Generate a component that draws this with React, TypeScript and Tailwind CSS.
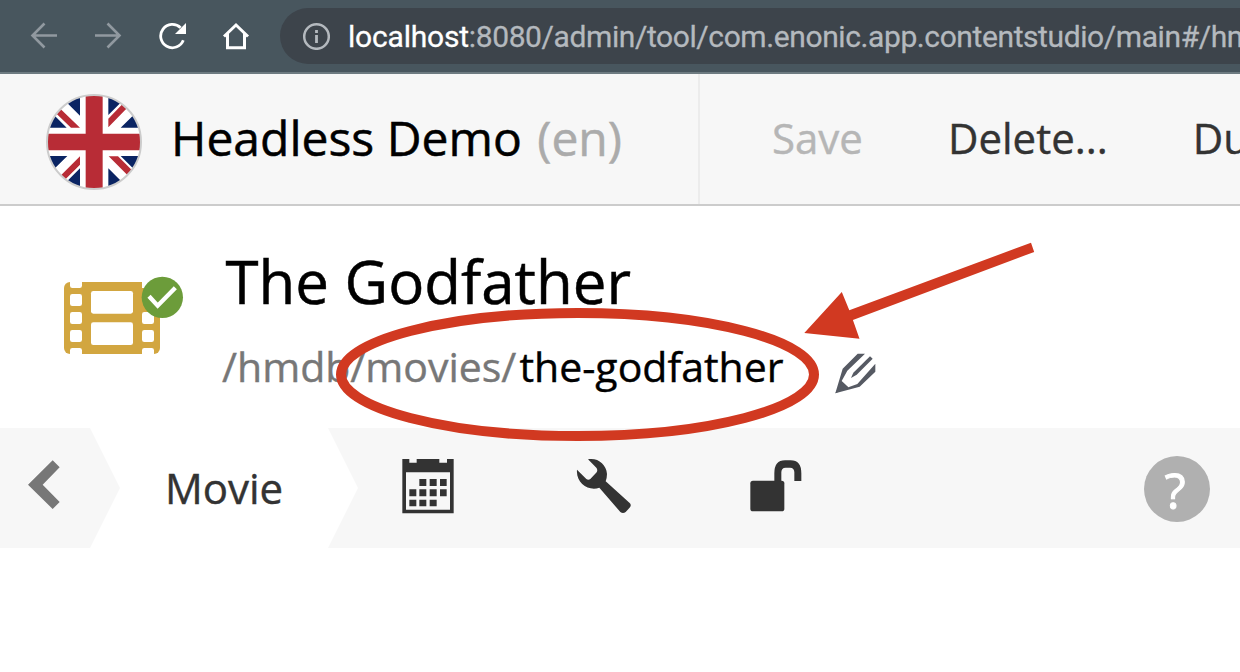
import React from 'react';

function BrowserBar() {
  return (
    <div className="flex h-[74px] items-center border-b-2 border-[#6e7b81] bg-[#48565e]">
      <svg className="ml-[30px] h-[28px] w-[220px] shrink-0" viewBox="30 22 220 28" fill="none">
        <g stroke="#9199a0" strokeWidth="2.6">
          <path d="M57 35.500H32.500M44.500 23.500l-12 12 12 12" />
          <path d="M95 35.500h24.500M107.500 23.500l12 12-12 12" />
        </g>
        <path d="M183.300 40.300A11.700 11.700 0 1 1 180.600 27.700" stroke="#fff" strokeWidth="2.800" />
        <path d="M186 23v11h-11z" fill="#fff" />
        <path d="M224 36.500l12-11.500 12 11.500M227.500 33.500v14.200h17V33.500" stroke="#fff" strokeWidth="3" />
      </svg>
      <div className="ml-[30px] flex h-14 min-w-0 flex-1 items-center overflow-hidden rounded-l-full bg-[#3d444b]">
        <svg className="ml-[22px] h-7 w-7 shrink-0" viewBox="0 0 28 28" fill="none">
          <circle cx="14.500" cy="14.500" r="12.300" stroke="#b4b9be" strokeWidth="2.500" />
          <path d="M14.500 13v8M14.500 8v3" stroke="#b4b9be" strokeWidth="2.800" />
        </svg>
        <div className="ml-[18px] whitespace-nowrap pt-px font-[Roboto,sans-serif] text-[30px] leading-[40px] tracking-[-0.4px] text-[#b4b9be] [-webkit-text-stroke:0.3px_currentColor]">
          <span className="tracking-[-0.2px] text-white">localhost</span>:8080/admin/tool/com.enonic.app.contentstudio/main#/hmdb
        </div>
      </div>
    </div>
  );
}

function Flag() {
  return (
    <svg className="ml-[46px] mt-[5px] h-[96px] w-[96px] shrink-0" viewBox="48 42 288 288">
      <defs>
        <clipPath id="disc"><circle cx="192" cy="186" r="141" /></clipPath>
      </defs>
      <g clipPath="url(#disc)">
        <path fill="#fff" d="M40 40h300v300H40z" />
        <path fill="#0a2463" d="M150 38v69L90 47zM48 81l62 62H48zM235 38v67l67-67zM272 143l64-63v63zM112 228l-64 63v-63zM150 265v65H85zM272 228h64v64zM235 265l65 65h-65z" />
        <path fill="#b82c36" d="M80 76l70 67h-27L70 92zM300 75l-65 67v-26l52-54zM150 229v25l-64 64-14-11zM236 229h28l60 60-14 14z" />
        <path fill="#b82c36" d="M167 40h51v121h120v50H218v120h-51V211H48v-50h119z" />
      </g>
      <circle cx="192" cy="186" r="141" fill="none" stroke="#ccc" strokeWidth="6" />
    </svg>
  );
}

function Toolbar() {
  return (
    <div className="flex h-[132px] border-b-2 border-[#ccc] bg-[#f7f7f7]">
      <div className="flex w-[700px] shrink-0 items-center border-r-2 border-[#ececec]">
        <Flag />
        <div className="ml-[29px] whitespace-nowrap pb-[3px] text-[48px] leading-[64px] [-webkit-text-stroke:0.5px_currentColor]">
          Headless Demo <span className="ml-[3px] text-[#ababab]">(en)</span>
        </div>
      </div>
      <div className="flex min-w-0 flex-1 items-center gap-[85px] overflow-hidden whitespace-nowrap pb-[3px] pl-[72px] text-[42px] leading-[60px] text-[#333] [-webkit-text-stroke:0.4px_currentColor]">
        <span className="text-[#b6b6b6]">Save</span>
        <span>Delete...</span>
        <span>Duplicate...</span>
      </div>
    </div>
  );
}

function FilmIcon() {
  return (
    <svg className="ml-16 mt-[70px] h-[78px] w-[120px] shrink-0" viewBox="42 48 360 234">
      <path fill="#d2a640" d="M60 66h252a18 18 0 0 1 18 18v180a18 18 0 0 1-18 18H60a18 18 0 0 1-18-18V84a18 18 0 0 1 18-18z" />
      <g fill="#fff">
        <rect x="123" y="93" width="126" height="68" rx="7" />
        <rect x="123" y="187" width="126" height="68" rx="7" />
        <path d="M60 60h36v17q0 7-7 7H67q-7 0-7-7zM60 286v-15q0-7 7-7h22q7 0 7 7v15zM276 286v-15q0-7 7-7h22q7 0 7 7v15zM276 48h56v36h-56z" />
        <rect x="60" y="102" width="36" height="36" rx="7" />
        <rect x="60" y="156" width="36" height="36" rx="7" />
        <rect x="60" y="210" width="36" height="36" rx="7" />
        <rect x="276" y="156" width="36" height="36" rx="7" />
        <rect x="276" y="210" width="36" height="36" rx="7" />
      </g>
      <circle cx="337" cy="112" r="62" fill="#6c9c3a" />
      <path d="M297 109l26 28 53-54" fill="none" stroke="#fff" strokeWidth="13" />
    </svg>
  );
}

function ContentHeader() {
  return (
    <div className="flex h-[222px]">
      <FilmIcon />
      <div className="ml-[38px] flex flex-col whitespace-nowrap pt-[35px]">
        <h1 className="pl-[3.5px] text-[60px] leading-[80px] [-webkit-text-stroke:0.5px_currentColor]">The Godfather</h1>
        <div className="flex pt-[15px] text-[41px] leading-[60px] [-webkit-text-stroke:0.4px_currentColor]">
          <span className="text-[#777]">/hmdb/movies/</span>
          <span className="ml-[3px]">the-godfather</span>
          <svg className="ml-[51px] mt-[17px] h-[41px] w-[41px]" viewBox="166 371 123 123">
            <path fill="#565a63" d="M234 373h22l-53 51-17 31 20 19 27-10 54-61v24l-47 45-73 20 22-74z" />
            <path fill="#565a63" d="M187 457l18 17-38 18z" />
            <path d="M214 446l7-16 50-49 8 7-48 48z" fill="#565a63" />
          </svg>
        </div>
      </div>
    </div>
  );
}

function StepBar() {
  return (
    <div className="flex h-[120px] text-[42px] leading-[60px] text-[#333]">
      <div className="flex w-[120px] shrink-0 bg-[#f7f7f7] [clip-path:polygon(0_0,90px_0,100%_50%,90px_100%,0_100%)]">
        <svg className="ml-7 mt-8 h-[50px] w-8" viewBox="84 119 96 150">
          <path fill="#777" d="M158 120l21 21-51 52 51 52-21 21-74-73z" />
        </svg>
      </div>
      <div className="flex w-[208px] shrink-0 items-center pl-[45px] [-webkit-text-stroke:0.4px_currentColor]">Movie</div>
      <div className="flex flex-1 bg-[#f7f7f7] [clip-path:polygon(0_0,100%_0,100%_100%,0_100%,30px_50%)]">
        <svg className="ml-[74px] mt-[30px] h-[56px] w-[52px]" viewBox="36 40 156 168" fill="#333">
          <path d="M37 43h21v11h22V43h68v11h23V43h20v163H37zM48 83v112h132V83z" fillRule="evenodd" />
          <path d="M88 103h21v21H88zM119 103h21v21h-21zM150 103h20v21h-20zM58 134h21v21H58zM88 134h21v21H88zM119 134h21v21h-21zM150 134h20v21h-20zM58 165h21v20H58zM88 165h21v20H88zM119 165h21v20h-21z" />
        </svg>
        <svg className="ml-[122px] mt-[30px] h-[56px] w-[56px]" viewBox="33 40 168 168" fill="#333">
          <path d="M69 44C97 38 124 58 126 88Q126 99 122 110L194 175Q200 181 195 188L182 202Q174 208 166 202L103 129C72 141 32 116 36 75L64 103Q70 107 76 103L95 83Q99 76 94 69z" />
        </svg>
        <svg className="ml-[118px] mt-8 h-[52px] w-[52px]" viewBox="46 45 156 156" fill="#333">
          <rect x="47" y="107" width="102" height="92" rx="8" />
          <path d="M119 108V85Q119 46 151 46h17Q200 46 200 85v23h-21V82q0-14-13-14h-13q-13 0-13 14v26z" />
        </svg>
        <div className="ml-auto mr-[30px] mt-7 flex h-[66px] w-[66px] items-center justify-center rounded-full bg-[#b0b0b0] pr-[4px] pt-[2px] text-[49px] leading-none text-white [-webkit-text-stroke:1px_white]">
          ?
        </div>
      </div>
    </div>
  );
}

export default function App() {
  return (
    <div className="relative h-[672px] w-[1240px] overflow-hidden bg-white font-['Open_Sans',sans-serif] text-black">
      <BrowserBar />
      <Toolbar />
      <ContentHeader />
      <StepBar />
      <svg className="pointer-events-none absolute left-[330px] top-[230px] h-[220px] w-[720px]" viewBox="330 230 720 220">
        <ellipse cx="577.500" cy="374.500" rx="236.500" ry="61.500" fill="none" stroke="#d13921" strokeWidth="10" />
        <path fill="#d13921" d="M804.300 333l37.500-41 7.500 18.300L1031 242.700l3.200 9.200-181.300 68 6.600 18.800z" />
      </svg>
    </div>
  );
}
